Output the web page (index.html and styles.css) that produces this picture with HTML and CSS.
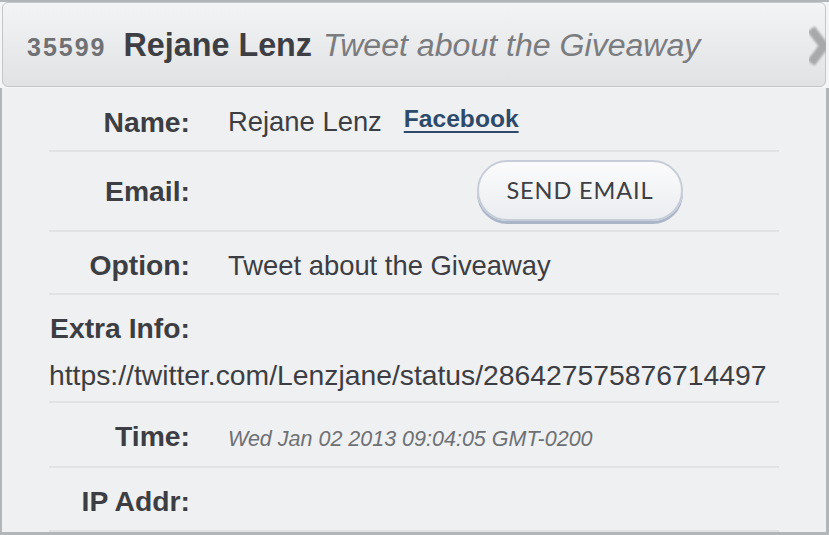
FILE: index.html
```html
<!DOCTYPE html>
<html>
<head>
<meta charset="utf-8">
<link rel="stylesheet" href="styles.css">
</head>
<body>
<div class="topstrip"></div>
<header class="head">
  <span class="head__id">35599</span>
  <span class="head__name">Rejane Lenz</span>
  <span class="head__opt">Tweet about the Giveaway</span>
  <svg class="head__chev" width="26" height="44" viewBox="0 0 26 44"><defs><filter id="b"><feGaussianBlur stdDeviation="1.3"/></filter></defs><polyline points="6,5 19,22 6,39" fill="none" stroke="#a7a9ab" stroke-width="9" filter="url(#b)"/></svg>
</header>
<main class="panel">
  <div class="row row--name">
    <div class="label">Name:</div>
    <div class="value">Rejane Lenz<a class="fb" href="#">Facebook</a></div>
  </div>
  <div class="row row--email">
    <div class="label">Email:</div>
    <div class="value"><button class="btn">SEND EMAIL</button></div>
  </div>
  <div class="row row--opt">
    <div class="label">Option:</div>
    <div class="value">Tweet about the Giveaway</div>
  </div>
  <div class="row row--extra">
    <div class="label">Extra Info:</div>
    <div class="url">https://twitter.com/Lenzjane/status/286427575876714497</div>
  </div>
  <div class="row row--time">
    <div class="label">Time:</div>
    <div class="value time">Wed Jan 02 2013 09:04:05 GMT-0200</div>
  </div>
  <div class="row row--ip">
    <div class="label">IP Addr:</div>
    <div class="value"></div>
  </div>
</main>
</body>
</html>
```

FILE: styles.css
```css
html, body {
  margin: 0;
  padding: 0;
}
body {
  width: 829px;
  height: 535px;
  overflow: hidden;
  background: #f4f5f6;
  font-family: "Liberation Sans", Arial, sans-serif;
  color: #3c3e43;
}
.topstrip {
  height: 2px;
  background: #b3b6b8;
}
.head {
  position: relative;
  height: 83px;
  margin: 0 3px 0 2px;
  border: 1px solid #c4c6c8;
  border-radius: 6px;
  background: linear-gradient(#f3f4f5, #e1e2e4);
  display: flex;
  align-items: baseline;
  padding: 0 0 0 24px;
  box-sizing: content-box;
  line-height: 84px;
  white-space: nowrap;
}
.head__id {
  font-weight: bold;
  font-size: 25px;
  letter-spacing: 2px;
  color: #6f7175;
  margin-right: 17px;
}
.head__name {
  font-weight: bold;
  font-size: 32.3px;
  color: #3d3f44;
  margin-right: 11px;
}
.head__opt {
  font-style: italic;
  font-size: 32.1px;
  color: #7a7c80;
}
.head__chev {
  position: absolute;
  right: -6px;
  top: 21px;
}
.panel {
  margin-top: 1px;
  height: 444px;
  background: #eff0f2;
  border-left: 2px solid #b3b6b8;
  border-right: 3px solid #b3b6b8;
  border-bottom: 3px solid #b3b6b8;
  padding: 0 47px;
}
.row {
  box-sizing: border-box;
  display: flex;
  align-items: center;
  min-height: 63px;
  padding-top: 6px;
  border-bottom: 2px solid #e1e2e4;
  font-size: 28.2px;
}
.row--name { min-height: 64px; }
.row--email { min-height: 80px; padding-top: 0; }
.row--opt { min-height: 63px; }
.row--extra {
  flex-wrap: wrap;
  min-height: 108px;
  align-content: center;
  padding-top: 8px;
}
.row--time { min-height: 65px; padding-top: 3px; }
.row--ip { min-height: 64px; padding-top: 5px; }
.label {
  width: 141px;
  flex-shrink: 0;
  text-align: right;
  font-weight: bold;
  font-size: 28.3px;
  white-space: nowrap;
}
.value {
  margin-left: 38px;
  white-space: nowrap;
  display: flex;
  align-items: center;
}
.row--name .value,
.row--opt .value {
  font-size: 27.4px;
}
.url {
  width: 100%;
  margin-top: 14px;
  white-space: nowrap;
  font-size: 28.3px;
}
.fb {
  font-weight: bold;
  font-size: 24.6px;
  color: #2d4a6b;
  margin-left: 22px;
  position: relative;
  top: -3px;
  text-decoration: underline;
  text-decoration-thickness: 2px;
  text-underline-offset: 4px;
}
.btn {
  margin-left: 249px;
  width: 206px;
  height: 61px;
  border: 2px solid #c6cdd9;
  border-radius: 31px;
  background: linear-gradient(#fbfbfc, #ebedf0);
  box-shadow: 0 3px 0 #aab5c8;
  font-family: Lato, "Liberation Sans", sans-serif;
  font-size: 23.5px;
  letter-spacing: 0.9px;
  color: #3d3f44;
  padding: 0;
  margin-top: -2px;
}
.time {
  font-style: italic;
  font-size: 21.5px;
  color: #6d7074;
  margin-top: 6px;
}
```
